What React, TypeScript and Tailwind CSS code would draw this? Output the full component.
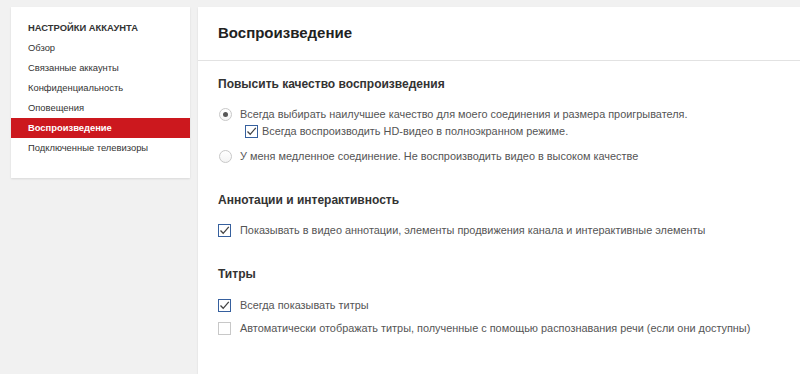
import React from 'react';

const menu = [
  'Обзор',
  'Связанные аккаунты',
  'Конфиденциальность',
  'Оповещения',
  'Воспроизведение',
  'Подключенные телевизоры'
];

const Check: React.FC<{ checked?: boolean }> = ({ checked }) => (
  <span
    className={`flex items-center justify-center w-[13px] h-[13px] shrink-0 bg-white border ${
      checked ? 'border-[#36609e]' : 'border-[#c8c8c8]'
    }`}
  >
    {checked && (
      <svg width="11" height="11" viewBox="0 0 11 11">
        <path d="M1.5 5.5 L4.2 8.3 L9.8 1.8" fill="none" stroke="#444" strokeWidth="1.3" />
      </svg>
    )}
  </span>
);

const Radio: React.FC<{ checked?: boolean }> = ({ checked }) => (
  <span className="flex items-center justify-center w-[13px] h-[13px] shrink-0 rounded-full bg-gradient-to-b from-white to-[#f4f4f4] border border-[#c8c8c8]">
    {checked && <span className="w-[5px] h-[5px] rounded-full bg-[#555]" />}
  </span>
);

const Row: React.FC<{ children: React.ReactNode; control: React.ReactNode; className?: string }> = ({
  children,
  control,
  className = ''
}) => (
  <div className={`flex items-center h-[17px] ${className}`}>
    {control}
    <span className="text-[10.9px] text-[#555] leading-[17px] whitespace-nowrap">{children}</span>
  </div>
);

export default function App() {
  return (
    <div className="min-h-[374px] bg-[#f1f1f1] flex gap-2 pt-[7px] pl-[11px] font-['Liberation_Sans',Arial,sans-serif]">
      {/* Sidebar */}
      <div className="w-[179px] self-start bg-white shadow-[0_1px_2px_rgba(0,0,0,0.1)] pt-[11px] pb-[20px]">
        <div className="h-[20px] leading-[20px] pl-[17px] text-[9.4px] font-bold text-[#333]">
          НАСТРОЙКИ АККАУНТА
        </div>
        {menu.map((item) => (
          <div
            key={item}
            className={`h-[20px] leading-[20px] pl-[17px] text-[9.4px] ${
              item === 'Воспроизведение' ? 'bg-[#cc181e] text-white font-bold' : 'text-[#333]'
            }`}
          >
            {item}
          </div>
        ))}
      </div>

      {/* Main */}
      <div className="flex-1 bg-white shadow-[0_1px_2px_rgba(0,0,0,0.1)]">
        <div className="h-[54px] flex items-center px-[20px] border-b border-[#e2e2e2]">
          <h1 className="text-[15px] font-bold text-[#222]">Воспроизведение</h1>
        </div>

        <div className="px-[20px]">
          {/* Quality */}
          <h2 className="mt-[15px] text-[12px] leading-[16px] font-bold text-[#333]">
            Повысить качество воспроизведения
          </h2>
          <Row className="mt-[13.5px]" control={<span className="ml-[1px] mr-[8px]"><Radio checked /></span>}>
            Всегда выбирать наилучшее качество для моего соединения и размера проигрывателя.
          </Row>
          <Row control={<span className="ml-[27px] mr-[4px]"><Check checked /></span>}>
            Всегда воспроизводить HD-видео в полноэкранном режиме.
          </Row>
          <Row className="mt-[8px]" control={<span className="ml-[1px] mr-[8px]"><Radio /></span>}>
            У меня медленное соединение. Не воспроизводить видео в высоком качестве
          </Row>

          {/* Annotations */}
          <h2 className="mt-[27.5px] text-[12px] leading-[16px] font-bold text-[#333]">
            Аннотации и интерактивность
          </h2>
          <Row className="mt-[13.5px]" control={<span className="mr-[9px]"><Check checked /></span>}>
            Показывать в видео аннотации, элементы продвижения канала и интерактивные элементы
          </Row>

          {/* Subtitles */}
          <h2 className="mt-[27.5px] text-[12px] leading-[16px] font-bold text-[#333]">Титры</h2>
          <Row className="mt-[14.5px]" control={<span className="mr-[9px]"><Check checked /></span>}>
            Всегда показывать титры
          </Row>
          <Row className="mt-[6px]" control={<span className="mr-[9px]"><Check /></span>}>
            Автоматически отображать титры, полученные с помощью распознавания речи (если они доступны)
          </Row>
        </div>
      </div>
    </div>
  );
}
